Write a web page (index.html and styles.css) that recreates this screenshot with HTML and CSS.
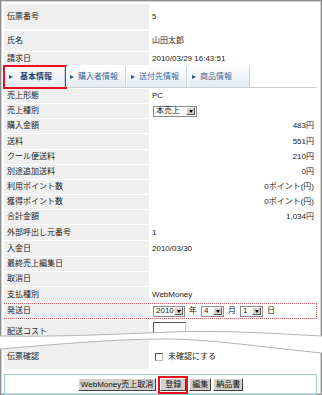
FILE: index.html
```html
<!DOCTYPE html>
<html lang="ja">
<head>
<meta charset="utf-8">
<link rel="stylesheet" href="styles.css">
</head>
<body>
<div class="frame">
  <div class="sheet">
    <div class="row r1"><div class="lbl">伝票番号</div><div class="val">5</div></div>
    <div class="row r2"><div class="lbl">氏名</div><div class="val">山田太郎</div></div>
    <div class="row r3"><div class="lbl">請求日</div><div class="val">2010/03/29 16:43:51</div></div>
    <div class="tabs">
      <div class="tab active"><span class="tri"></span><span class="tt">基本情報</span></div>
      <div class="tab"><span class="tri"></span><span class="tt">購入者情報</span></div>
      <div class="tab"><span class="tri"></span><span class="tt">送付先情報</span></div>
      <div class="tab w4"><span class="tri"></span><span class="tt">商品情報</span></div>
    </div>
    <div class="row"><div class="lbl">売上形態</div><div class="val">PC</div></div>
    <div class="row"><div class="lbl">売上種別</div><div class="val"><span class="sel s-kind"><span class="st">本売上</span><span class="sb"></span></span></div></div>
    <div class="row"><div class="lbl">購入金額</div><div class="val num">483円</div></div>
    <div class="row t"><div class="lbl">送料</div><div class="val num">551円</div></div>
    <div class="row"><div class="lbl">クール便送料</div><div class="val num">210円</div></div>
    <div class="row"><div class="lbl">別途追加送料</div><div class="val num">0円</div></div>
    <div class="row"><div class="lbl">利用ポイント数</div><div class="val num">0ポイント(円)</div></div>
    <div class="row"><div class="lbl">獲得ポイント数</div><div class="val num">0ポイント(円)</div></div>
    <div class="row"><div class="lbl">合計金額</div><div class="val num">1,034円</div></div>
    <div class="row t"><div class="lbl">外部呼出し元番号</div><div class="val">1</div></div>
    <div class="row t"><div class="lbl">入金日</div><div class="val">2010/03/30</div></div>
    <div class="row"><div class="lbl">最終売上編集日</div><div class="val"></div></div>
    <div class="row"><div class="lbl">取消日</div><div class="val"></div></div>
    <div class="row t"><div class="lbl">支払種別</div><div class="val">WebMoney</div></div>
    <div class="row ship"><div class="lbl">発送日</div><div class="val dates">
      <span class="sel s-year"><span class="st">2010</span><span class="sb"></span></span><span class="unit">年</span>
      <span class="sel s-md"><span class="st">4</span><span class="sb"></span></span><span class="unit">月</span>
      <span class="sel s-md"><span class="st">1</span><span class="sb"></span></span><span class="unit">日</span>
    </div></div>
    <div class="row cost"><div class="lbl">配送コスト</div><div class="val"><span class="inp"></span></div></div>
    <div class="row confirm"><div class="lbl">伝票確認</div><div class="val"><span class="chk"></span><span>未確認にする</span></div></div>
    <div class="btnbar">
      <span class="btn">WebMoney売上取消</span>
      <span class="btn mark">登録</span>
      <span class="btn">編集</span>
      <span class="btn">納品書</span>
    </div>
  </div>
  <svg class="cut" width="322" height="24" viewBox="0 0 322 24">
    <path d="M0 5 C60 6 120 3 170 1 C230 -1 280 3 322 5 L322 22 C260 16 210 8 165 8 C110 8 50 14 0 18 Z" fill="#fff"/>
    <path d="M0 5 C60 6 120 3 170 1 C230 -1 280 3 322 5" fill="none" stroke="#b4b4b4" stroke-width="1"/>
    <path d="M322 22 C260 16 210 8 165 8 C110 8 50 14 0 18" fill="none" stroke="#b4b4b4" stroke-width="1"/>
  </svg>
</div>
</body>
</html>
```

FILE: styles.css
```css
* { box-sizing: border-box; margin: 0; padding: 0; }
html, body { width: 322px; height: 395px; overflow: hidden; background: #fff; }
body {
  font-family: "Liberation Sans", "Noto Sans CJK JP", sans-serif;
  font-size: 8px;
  color: #222;
  line-height: 1;
}
.frame {
  position: relative;
  width: 322px;
  height: 395px;
  border: 1px solid #8c8c8c;
  box-shadow: inset 0 0 0 1px #d4d4d4;
  padding: 3px 4px 0 3px;
}
.sheet { display: flex; flex-direction: column; gap: 1px; }
.row {
  display: grid;
  grid-template-columns: 145px 1fr;
  column-gap: 2px;
  height: 14px;
}
.row.t { height: 15px; }
.row.r1 { height: 25px; }
.row.r2 { height: 20px; margin-top: 1px; }
.row.r3 { height: 13px; }
.lbl {
  background: #efefef;
  padding-left: 3px;
  display: flex;
  align-items: center;
}
.val { display: flex; align-items: center; padding-left: 1px; }
.val.num { justify-content: flex-end; padding-right: 3px; }

.tabs {
  display: flex;
  height: 22px;
  border-bottom: 1px solid #cfcfcf;
  padding-left: 1px;
}
.tab {
  position: relative;
  width: 60px;
  height: 21px;
  margin-right: 1px;
  display: flex;
  align-items: center;
  padding-left: 4px;
  background: linear-gradient(#ffffff, #e4ebf2);
  border-right: 1px solid #c9d3de;
  color: #3b679a;
}
.tab.w4 { width: 62px; }
.tab .tri {
  width: 0; height: 0;
  border-left: 4px solid #2c5a8e;
  border-top: 2.5px solid transparent;
  border-bottom: 2.5px solid transparent;
  margin-right: 4px;
}
.tab.active { color: #1f3f6e; font-weight: bold; }
.tab.active .tri { margin-right: 7px; }
.tab.active::after {
  content: "";
  position: absolute;
  left: -2px; top: -1px; right: -3px; bottom: -2px;
  border: 2px solid #e8101a;
}

.sel {
  display: inline-flex;
  align-items: center;
  height: 11px;
  border: 1px solid #8a8a8a;
  background: #fff;
  padding: 0 1px 0 2px;
  justify-content: space-between;
}
.sel .sb {
  width: 9px; height: 8px;
  background: #d4d0c8;
  border: 1px solid;
  border-color: #fff #555 #555 #fff;
  position: relative;
}
.sel .sb::after {
  content: "";
  position: absolute;
  left: 1.5px; top: 2px;
  border-top: 3px solid #000;
  border-left: 2.5px solid transparent;
  border-right: 2.5px solid transparent;
}
.s-kind { width: 44px; margin-left: 1px; }
.s-year { width: 32px; }
.s-md { width: 23px; }
.unit { margin: 0 4px 0 4px; }

.row.ship {
  height: 16px;
  border: 1px dotted #e4525a;
}
.row.ship .lbl { margin-left: -1px; }
.row.cost { height: 24px; align-items: start; }
.row.cost .lbl { height: 24px; }
.row.cost .val { align-items: flex-start; padding-top: 2px; }
.inp {
  width: 33px; height: 14px;
  border: 1px solid;
  border-color: #555 #ccc #ccc #555;
  margin-left: 1px;
}
.row.confirm { height: 26px; margin-top: -2px; }
.row.confirm .lbl { padding-top: 2px; }
.row.confirm .val { padding-top: 2px; padding-left: 4px; }
.chk {
  width: 8px; height: 8px;
  border: 1px solid;
  border-color: #555 #bbb #bbb #555;
  margin-right: 5px;
}

.btnbar {
  margin-top: 4px;
  height: 21px;
  border: 1px solid #9ccbdc;
  display: flex;
  justify-content: center;
  align-items: center;
  gap: 2px;
}
.btn {
  position: relative;
  display: inline-flex;
  align-items: center;
  justify-content: center;
  height: 13px;
  padding: 0 2px;
  background: #d4d0c8;
  border: 1px solid;
  border-color: #fff #404040 #404040 #fff;
  color: #111;
}
.btn.mark { margin: 0 1px 0 2px; padding: 0 4px; }
.btn.mark::after {
  content: "";
  position: absolute;
  left: -3px; top: -3px; right: -3px; bottom: -4px;
  border: 2px solid #e8101a;
}
.cut { position: absolute; left: -1px; top: 330px; }
```
